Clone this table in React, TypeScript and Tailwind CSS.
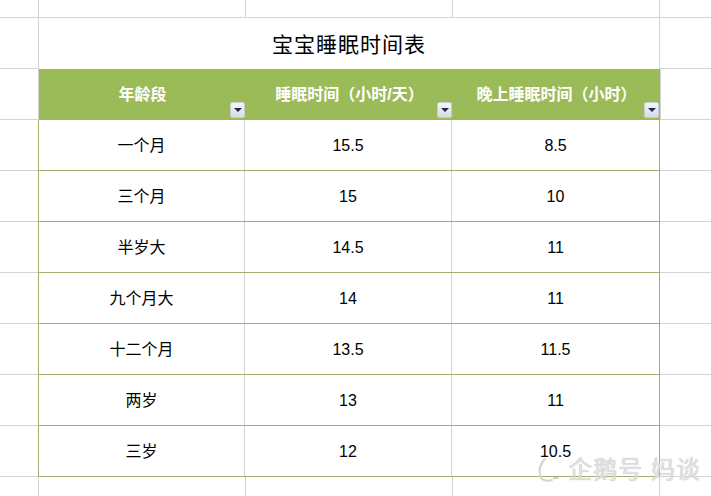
import React from 'react';

const rows = [
  ['一个月', '15.5', '8.5'],
  ['三个月', '15', '10'],
  ['半岁大', '14.5', '11'],
  ['九个月大', '14', '11'],
  ['十二个月', '13.5', '11.5'],
  ['两岁', '13', '11'],
  ['三岁', '12', '10.5'],
];

const headers = ['年龄段', '睡眠时间（小时/天）', '晚上睡眠时间（小时）'];

function FilterButton() {
  return (
    <div className="absolute right-[1px] bottom-[2px] flex h-[16px] w-[15px] items-center justify-center rounded-[2px] border border-[#c9ccd6] bg-gradient-to-b from-[#f4f5f8] to-[#d9dbe3]">
      <div className="h-0 w-0 border-x-[4px] border-t-[4px] border-x-transparent border-t-[#1e2a4a]" />
    </div>
  );
}

export default function App() {
  return (
    <div
      className="relative h-[496px] w-[711px] overflow-hidden bg-white text-black"
      style={{ fontFamily: '"Liberation Sans", "Noto Sans CJK SC", sans-serif' }}>
      {/* top gridline row */}
      <div className="flex h-[18px] border-b border-[#d4d4d4]">
        <div className="w-[39px] border-r border-[#d4d4d4]" />
        <div className="w-[207px] border-r border-[#d4d4d4]" />
        <div className="w-[207px] border-r border-[#d4d4d4]" />
        <div className="w-[207px] border-r border-[#d4d4d4]" />
        <div className="flex-1" />
      </div>

      {/* title row (merged) */}
      <div className="flex h-[51px]">
        <div className="w-[39px] border-r border-b border-[#d4d4d4]" />
        <div className="flex w-[621px] items-center justify-center border-r border-[#d4d4d4] pt-[2px] text-[21px] tracking-[1px]">
          宝宝睡眠时间表
        </div>
        <div className="flex-1 border-b border-[#d4d4d4]" />
      </div>

      {/* header row */}
      <div className="flex h-[51px]">
        <div className="w-[39px] border-r border-b border-[#d4d4d4]" />
        {headers.map((h) => (
          <div
            key={h}
            className="relative flex w-[207px] items-center justify-center bg-[#9bbb59] text-[16px] font-bold text-white">
            {h}
            <FilterButton />
          </div>
        ))}
        <div className="flex-1 border-l border-b border-[#d4d4d4]" />
      </div>

      {/* data rows */}
      {rows.map((r) => (
        <div key={r[0]} className="flex h-[51px]">
          <div className="w-[38px] border-b border-[#d4d4d4]" />
          <div className="flex w-[622px] border-x border-b border-[#a7ab70]">
            <div className="flex w-[206px] items-center justify-center border-r border-[#d4d4d4] pt-[1px] text-[16px]">
              {r[0]}
            </div>
            <div className="flex w-[207px] items-center justify-center border-r border-[#d4d4d4] pt-[1px] text-[16px]">
              {r[1]}
            </div>
            <div className="flex flex-1 items-center justify-center pt-[1px] text-[16px]">{r[2]}</div>
          </div>
          <div className="flex-1 border-b border-[#d4d4d4]" />
        </div>
      ))}

      {/* trailing row */}
      <div className="flex h-[20px]">
        <div className="w-[39px] border-r border-[#d4d4d4]" />
        <div className="w-[207px] border-r border-[#d4d4d4]" />
        <div className="w-[207px] border-r border-[#d4d4d4]" />
        <div className="w-[207px] border-r border-[#d4d4d4]" />
        <div className="flex-1" />
      </div>

      {/* watermark */}
      <div className="absolute right-[10px] bottom-[13px] flex items-center gap-[8px] text-[#e2e2e2]">
        <svg width="24" height="26" viewBox="0 0 24 26" fill="none">
          <path
            d="M9 2 C3 8 2 16 6 22 C8 24 12 24 16 23"
            stroke="#d2d2d2"
            strokeWidth="2"
            strokeLinecap="round"
          />
          <path d="M18 21 L22 21" stroke="#d2d2d2" strokeWidth="2" strokeLinecap="round" />
        </svg>
        <span
          className="text-[24px] leading-none tracking-[1px]"
          style={{ textShadow: '0 0 1px #a8a8a8' }}>
          企鹅号 妈谈
        </span>
      </div>
    </div>
  );
}
